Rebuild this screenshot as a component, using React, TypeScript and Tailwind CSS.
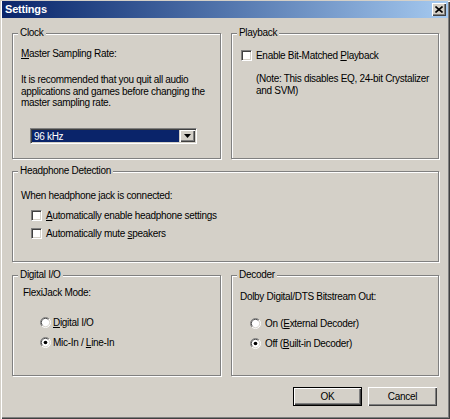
import { ReactNode } from "react";

const font = "font-['Tahoma','Liberation_Sans',Arial,sans-serif]";

function Group({ label, className, children }: { label: string; className?: string; children?: ReactNode }) {
  return (
    <div
      className={`relative border border-[#808080] shadow-[inset_1px_1px_0_#fff,1px_1px_0_#fff] ${className ?? ""}`}
    >
      <span className="absolute left-[5px] top-[-7px] bg-[#d4d0c8] px-[2px] leading-[12px]">{label}</span>
      {children}
    </div>
  );
}

function Check() {
  return (
    <span className="inline-block h-[11px] w-[11px] shrink-0 border border-b-white border-l-[#808080] border-r-white border-t-[#808080] bg-white shadow-[inset_1px_1px_0_#404040,inset_-1px_-1px_0_#d4d0c8]" />
  );
}

function Radio({ on }: { on?: boolean }) {
  return (
    <svg width="11" height="11" viewBox="0 0 12 12" className="shrink-0">
      <circle cx="6" cy="6" r="5" fill="#fff" />
      <path d="M2.1 9.9A5.5 5.5 0 0 1 9.9 2.1" fill="none" stroke="#808080" strokeWidth="1" />
      <path d="M9.9 2.1A5.5 5.5 0 0 1 2.1 9.9" fill="none" stroke="#fff" strokeWidth="1" />
      <path d="M2.8 9.2A4.5 4.5 0 0 1 9.2 2.8" fill="none" stroke="#404040" strokeWidth="1" />
      <path d="M9.2 2.8A4.5 4.5 0 0 1 2.8 9.2" fill="none" stroke="#d4d0c8" strokeWidth="1" />
      {on && <circle cx="6" cy="6" r="2" fill="#000" />}
    </svg>
  );
}

function U({ children }: { children: ReactNode }) {
  return <span className="underline underline-offset-[1px]">{children}</span>;
}

export default function App() {
  return (
    <div
      className={`${font} flex h-[419px] w-[450px] flex-col bg-[#d4d0c8] px-[2px] pb-[2px] text-[10px] tracking-[-0.3px] text-black shadow-[inset_1px_1px_0_#d4d0c8,inset_2px_2px_0_#fff,inset_-1px_-1px_0_#404040,inset_-2px_-2px_0_#808080]`}
    >
      {/* title bar */}
      <div className="mt-[1px] flex h-[17px] items-center justify-between bg-gradient-to-r from-[#0a246a] to-[#a6caf0] pl-[3px] pr-[2px]">
        <span className="text-[11px] font-bold tracking-[-0.2px] text-white">Settings</span>
        <button className="flex h-[13px] w-[14px] items-center justify-center bg-[#d4d0c8] shadow-[inset_1px_1px_0_#fff,inset_-1px_-1px_0_#404040,inset_-2px_-2px_0_#808080]">
          <svg width="8" height="7" viewBox="0 0 8 7">
            <path d="M0.5 0.5L7.5 6.5M7.5 0.5L0.5 6.5" stroke="#000" strokeWidth="1.6" />
          </svg>
        </button>
      </div>

      <div className="flex flex-col pl-[10px] pr-[9px]">
        {/* row 1 */}
        <div className="mt-[15px] flex h-[126px] gap-[10px]">
          <Group label="Clock" className="w-[209px]">
            <div className="flex flex-col pl-[8px] pt-[14px]">
              <div className="leading-[12px]">
                <U>M</U>aster Sampling Rate:
              </div>
              <div className="mt-[14px] h-[35px] leading-[11.5px]">
                It is recommended that you quit all audio
                <br />
                applications and games before changing the
                <br />
                master sampling rate.
              </div>
              <div className="ml-[9px] mt-[19px] flex h-[16px] w-[167px] border border-b-white border-l-[#808080] border-r-white border-t-[#808080] shadow-[inset_1px_1px_0_#404040,inset_-1px_-1px_0_#d4d0c8]">
                <div className="m-[1px] flex flex-1 items-center bg-[#0a246a] pl-[2px] text-white">96 kHz</div>
                <div className="my-[1px] mr-[1px] flex w-[15px] items-center justify-center bg-[#d4d0c8] shadow-[inset_1px_1px_0_#fff,inset_-1px_-1px_0_#404040,inset_-2px_-2px_0_#808080]">
                  <svg width="7" height="4" viewBox="0 0 7 4">
                    <path d="M0 0h7L3.5 4z" fill="#000" />
                  </svg>
                </div>
              </div>
            </div>
          </Group>
          <Group label="Playback" className="w-[208px]">
            <div className="flex flex-col pl-[9px] pt-[16px]">
              <div className="flex h-[11px] items-center gap-[4px]">
                <Check />
                <span>
                  Enable Bit-Matched <U>P</U>layback
                </span>
              </div>
              <div className="ml-[15px] mt-[12px] whitespace-nowrap leading-[11.5px]">
                (Note: This disables EQ, 24-bit Crystalizer
                <br />
                and SVM)
              </div>
            </div>
          </Group>
        </div>

        {/* row 2 */}
        <Group label="Headphone Detection" className="mt-[12px] h-[91px]">
          <div className="flex flex-col pl-[8px] pt-[18px]">
            <div className="leading-[12px]">When headphone jack is connected:</div>
            <div className="ml-[10px] mt-[8px] flex h-[11px] items-center gap-[4px]">
              <Check />
              <span>
                <U>A</U>utomatically enable headphone settings
              </span>
            </div>
            <div className="ml-[10px] mt-[7px] flex h-[11px] items-center gap-[4px]">
              <Check />
              <span>
                Automatically mute <U>s</U>peakers
              </span>
            </div>
          </div>
        </Group>

        {/* row 3 */}
        <div className="mt-[13px] flex h-[101px] gap-[10px]">
          <Group label="Digital I/O" className="w-[209px]">
            <div className="flex flex-col pl-[10px] pt-[11px]">
              <div className="leading-[12px]">FlexiJack Mode:</div>
              <div className="ml-[17px] mt-[17px] flex h-[12px] items-center gap-[2px]">
                <Radio />
                <span>
                  <U>D</U>igital I/O
                </span>
              </div>
              <div className="ml-[17px] mt-[8px] flex h-[12px] items-center gap-[2px]">
                <Radio on />
                <span>
                  Mic-In / <U>L</U>ine-In
                </span>
              </div>
            </div>
          </Group>
          <Group label="Decoder" className="w-[208px]">
            <div className="flex flex-col pl-[8px] pt-[15px]">
              <div className="leading-[12px]">Dolby Digital/DTS Bitstream Out:</div>
              <div className="ml-[10px] mt-[14px] flex h-[12px] items-center gap-[4px]">
                <Radio />
                <span>
                  On (<U>E</U>xternal Decoder)
                </span>
              </div>
              <div className="ml-[10px] mt-[8px] flex h-[12px] items-center gap-[4px]">
                <Radio on />
                <span>
                  Off (<U>B</U>uilt-in Decoder)
                </span>
              </div>
            </div>
          </Group>
        </div>

        {/* buttons */}
        <div className="mt-[11px] flex justify-end gap-[6px] pr-[2px]">
          <button className="h-[19px] w-[69px] border border-black bg-[#d4d0c8] shadow-[inset_1px_1px_0_#fff,inset_-1px_-1px_0_#404040,inset_-2px_-2px_0_#808080]">
            OK
          </button>
          <button className="h-[19px] w-[69px] bg-[#d4d0c8] shadow-[inset_1px_1px_0_#fff,inset_-1px_-1px_0_#404040,inset_-2px_-2px_0_#808080]">
            Cancel
          </button>
        </div>
      </div>
    </div>
  );
}
